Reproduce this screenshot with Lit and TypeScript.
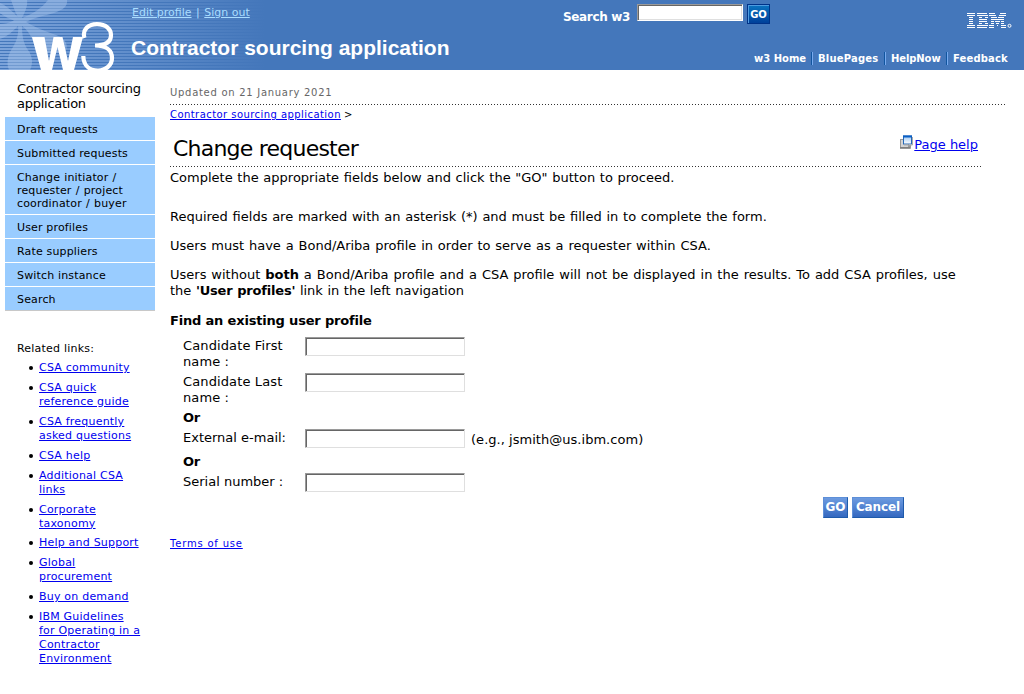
import { LitElement, html, css, svg } from "lit";
import { customElement } from "lit/decorators.js";

const menu: string[][] = [
  ["Draft requests"],
  ["Submitted requests"],
  ["Change initiator /", "requester / project", "coordinator / buyer"],
  ["User profiles"],
  ["Rate suppliers"],
  ["Switch instance"],
  ["Search"],
];

const related: string[][] = [
  ["CSA community"],
  ["CSA quick", "reference guide"],
  ["CSA frequently", "asked questions"],
  ["CSA help"],
  ["Additional CSA", "links"],
  ["Corporate", "taxonomy"],
  ["Help and Support"],
  ["Global", "procurement"],
  ["Buy on demand"],
  ["IBM Guidelines", "for Operating in a", "Contractor", "Environment"],
];

// Horizontal bars of the eight-line logo: [start, end] pairs for each line.
const bars: number[][][] = [
  [[0, 8], [10, 20], [22, 28], [33, 39]],
  [[0, 8], [10, 21], [22, 29], [32, 39]],
  [[2, 6], [12, 15], [18, 21], [24, 30], [31, 37]],
  [[2, 6], [12, 20], [24, 37]],
  [[2, 6], [12, 20], [24, 27], [28, 33], [34, 37]],
  [[2, 6], [12, 15], [18, 21], [24, 27], [29, 32], [34, 37]],
  [[0, 8], [10, 21], [22, 27], [30, 31], [34, 39]],
  [[0, 8], [10, 20], [22, 27], [34, 39]],
];

const stack = (lines: string[]) => lines.map((l, i) => html`${i ? html`<br />` : ""}${l}`);

@customElement("app-root")
export class AppRoot extends LitElement {
  static styles = css`
    :host { display: block; width: 1024px; height: 694px; overflow: hidden; background: #fff; color: #000;
      font-family: "DejaVu Sans", sans-serif; font-size: 13px; line-height: 16px; white-space: nowrap; }
    a { color: #0000ee; text-decoration: underline; }
    header { display: flex; height: 70px; color: #fff;
      background: linear-gradient(90deg, rgba(68, 119, 187, 0), #4477bb 265px),
        repeating-linear-gradient(#7ba3da 0 2px, #4477bb 2px 3px); }
    .logo { width: 131px; height: 70px; flex: none; display: block; }
    .petals { fill: #a9c6ec; opacity: 0.45; }
    .brand { width: 431px; }
    .account { font-size: 11px; line-height: 14px; padding: 6px 0 0 1px; color: #aaddff; }
    .account a { color: #aaddff; }
    .account i { font-style: normal; margin: 0 1px; }
    .brand h1 { margin: 16px 0 0; font: bold 21px/24px "Liberation Sans", sans-serif; }
    .tools { flex: 1; display: flex; flex-direction: column; }
    .search { display: flex; height: 52px; }
    .search b { box-sizing: border-box; font-size: 12px; width: 75px; padding: 9px 0 0 1px; letter-spacing: -0.35px; }
    .field { box-sizing: border-box; background: #fff; border: 1px solid; border-color: #9a9a9a #dfdfdf #dfdfdf #9a9a9a;
      box-shadow: inset 1px 1px 0 #666; }
    .search .field { width: 106px; height: 17px; margin-top: 4px; border-color: #9a9a9a #fff #fff #9a9a9a;
      box-shadow: inset 1px 1px 0 #666, inset -1px -1px 0 #dfdfdf; }
    .search button { all: unset; box-sizing: border-box; width: 23px; height: 20px; margin: 4px 0 0 4px; border: 1px solid #003388;
      background: linear-gradient(#0b74c0, #00409a); box-shadow: inset 1px 1px 0 #4f9be0; font: bold 10px/19px "DejaVu Sans", sans-serif; text-align: center; }
    .ibm { width: 46px; height: 18px; margin: 13px 0 0 197px; display: block; }
    nav.top { display: flex; font-size: 10px; font-weight: bold; line-height: 13px; padding-left: 192px; }
    nav.top span { box-sizing: border-box; height: 13px; flex: none; }
    nav.top i { width: 1px; height: 13px; background: #11559f; border-right: 1px solid #77aaee; margin-right: 5px; }
    .n1 { width: 57px; }
    .n2 { width: 66px; letter-spacing: 0.2px; }
    .n3 { width: 55px; letter-spacing: -0.1px; }
    .n4 { letter-spacing: 0.15px; }
    .body { display: flex; }
    aside { width: 170px; padding: 11px 0 0 5px; box-sizing: border-box; flex: none; }
    .side-title { padding: 0 0 6px 12px; line-height: 15px; letter-spacing: -0.26px; }
    .menu { width: 150px; font-size: 11px; line-height: 13px; border-bottom: 1px solid #c8c8c8; letter-spacing: 0.16px; }
    .menu div { background: #99ccff; padding: 6px 0 4px 12px; border-bottom: 1px solid #fff; }
    .menu div.multi { word-spacing: 0.5px; }
    .menu div:last-child { border: 0; }
    .related { font-size: 11px; line-height: 14px; padding: 31px 0 0 12px; letter-spacing: 0.21px; }
    .related ul { margin: 5px 0 0; padding: 0 0 0 22px; list-style: none; display: flex; flex-direction: column; gap: 5.92px; }
    .related li::before { content: ""; float: left; width: 4px; height: 4px; border-radius: 50%; background: #000; margin: 5px 0 0 -10px; }
    main { width: 836px; padding-top: 16px; }
    .updated { font-size: 10px; line-height: 14px; color: #666; padding-bottom: 4px; letter-spacing: 0.71px; }
    .dots { height: 1px; background: repeating-linear-gradient(90deg, #333 0 1px, transparent 1px 3px); }
    .crumb { font-size: 10px; line-height: 14px; padding-top: 3px; }
    .crumb a { letter-spacing: 0.44px; }
    .head { display: flex; justify-content: space-between; width: 805px; height: 44px; padding-left: 3px; }
    h2 { margin: 14px 0 0; font-size: 22px; line-height: 26px; font-weight: normal; letter-spacing: -0.78px; }
    .help { display: flex; margin-top: 13px; line-height: 20px; }
    .help svg { width: 14px; height: 15px; }
    p { margin: 13px 0 0; word-spacing: 0.74px; }
    .short { width: 811px; }
    p.intro { margin: 0; padding-top: 3px; word-spacing: 0.55px; }
    p.required { margin-top: 23px; word-spacing: 0.6px; }
    p.both { word-spacing: 0.82px; }
    p.both .last { word-spacing: 0.4px; }
    p b { letter-spacing: -0.18px; }
    p .plain { letter-spacing: 0; }
    p.find { margin-top: 14px; word-spacing: 0; }
    .form { display: grid; grid-template-columns: 122px 160px auto; grid-template-rows: 36px 36px 20px 24px 20px 20px;
      width: 600px; padding: 8px 0 0 13px; }
    .form .field { width: 160px; height: 19px; }
    .form span { padding-top: 1px; }
    .form b { grid-column: 1 / -1; letter-spacing: -0.2px; padding-top: 1px; }
    .form .name { letter-spacing: 0.12px; }
    .form .note { padding: 3px 0 0 6px; letter-spacing: 0.03px; }
    .actions { display: flex; gap: 4px; padding: 4px 0 0 653px; }
    .actions button { all: unset; box-sizing: border-box; width: 25px; height: 21px; color: #fff; font: bold 12px/19px "DejaVu Sans", sans-serif; text-align: center;
      background: linear-gradient(#6d9be0, #3468c0); border: 1px solid; border-color: #5d8fd8 #1f5bab #1f5bab #5d8fd8; }
    .actions button.cancel { width: 52px; letter-spacing: -0.1px; }
    .terms { font-size: 10px; padding-top: 18px; letter-spacing: 0.8px; }
  `;

  render() {
    return html`
      <header>
        <svg class="logo" viewBox="0 0 131 70">
          <path class="petals" d="M22 18C25 12 28 6 27 0H11C13 6 16 14 18 17C12 11 7 6 0 3V13C5 17 10 19 14 20.500C9 23 5 24 0 24V39C7 37 13 31 18 26C19 32 17 41 13 47C8 54 6 63 9 70H30C33 64 33 57 28 50C23 43 22 34 22 26C29 31 34 40 36 53H65C69 45 66 39 56 35C45 31 34 27 26 22C36 17 44 16 54 13C63 10 68 6 67 0H48C43 7 33 14 22 18z" />
          <path fill="none" stroke="#fff" stroke-width="4.2" d="M84.500 38C82 30 88 24.100 97 24.100C106 24.100 111 29 111 35C111 42 105 45.500 95 45.500C107 45.500 112 51 112 58C112 65 106 70.500 98 70.500C89 70.500 83.500 65 83.300 56" />
          <path fill="#fff" d="M32 37H44.500L49 61L53.500 37H62.500L68 61L73 37H83L74 70H63L57.500 47L52 70H41z" />
        </svg>
        <div class="brand">
          <div class="account"><a>Edit profile</a><i> | </i><a>Sign out</a></div>
          <h1>Contractor sourcing application</h1>
        </div>
        <div class="tools">
          <div class="search">
            <b>Search w3</b><div class="field"></div><button>GO</button>
            <svg class="ibm" viewBox="0 0 46 18" fill="#fff" shape-rendering="crispEdges">
              ${bars.map((row, i) => row.map(([a, b]) => svg`<rect x=${a} y=${i * 2} width=${b - a} height="1" />`))}
              <circle cx="42.500" cy="12.800" r="1.500" fill="none" stroke="#fff" shape-rendering="auto" />
            </svg>
          </div>
          <nav class="top">
            <span class="n1">w3 Home</span><i></i><span class="n2">BluePages</span><i></i><span class="n3">HelpNow</span><i></i><span class="n4">Feedback</span>
          </nav>
        </div>
      </header>
      <div class="body">
        <aside>
          <div class="side-title">Contractor sourcing<br />application</div>
          <div class="menu">${menu.map((m) => html`<div class=${m.length > 1 ? "multi" : ""}>${stack(m)}</div>`)}</div>
          <div class="related">Related links:<ul>${related.map((m) => html`<li><a>${stack(m)}</a></li>`)}</ul></div>
        </aside>
        <main>
          <div class="updated">Updated on 21 January 2021</div>
          <div class="dots"></div>
          <div class="crumb"><a>Contractor sourcing application</a> &gt;</div>
          <div class="head">
            <h2>Change requester</h2>
            <div class="help">
              <svg viewBox="0 0 14 15">
                <defs>
                  <linearGradient id="pane" x2="0" y2="1"><stop stop-color="#9cc6f2" /><stop offset="1" stop-color="#fff" /></linearGradient>
                </defs>
                <rect x="0.500" y="4.500" width="8" height="8" fill="#d4d4d4" stroke="#999" />
                <path d="M0 13H10V10" stroke="#777" stroke-width="1.500" fill="none" />
                <rect x="3.500" y="1" width="8" height="8" fill="url(#pane)" stroke="#2468b8" />
                <path d="M3 1.500H12" stroke="#0a5fc4" stroke-width="2" />
                <path d="M4 10H12.500V2" stroke="#aaa" fill="none" />
              </svg><a>Page help</a>
            </div>
          </div>
          <div class="dots short"></div>
          <p class="intro">Complete the appropriate fields below and click the "GO" button to proceed.</p>
          <p class="required">Required fields are marked with an asterisk (*) and must be filled in to complete the form.</p>
          <p>Users must have a Bond/Ariba profile in order to serve as a requester within CSA.</p>
          <p class="both">Users without <b class="plain">both</b> a Bond/Ariba profile and a CSA profile will not be displayed in the results. To add CSA profiles, use<br /><span class="last">the <b>'User profiles'</b> link in the left navigation</span></p>
          <p class="find"><b>Find an existing user profile</b></p>
          <div class="form">
            <span class="name">Candidate First<br />name :</span><div class="field"></div><i></i>
            <span class="name">Candidate Last<br />name :</span><div class="field"></div><i></i>
            <b>Or</b>
            <span>External e-mail:</span><div class="field"></div><span class="note">(e.g., jsmith@us.ibm.com)</span>
            <b>Or</b>
            <span>Serial number :</span><div class="field"></div><i></i>
          </div>
          <div class="actions"><button>GO</button><button class="cancel">Cancel</button></div>
          <div class="terms"><a>Terms of use</a></div>
        </main>
      </div>
    `;
  }
}
